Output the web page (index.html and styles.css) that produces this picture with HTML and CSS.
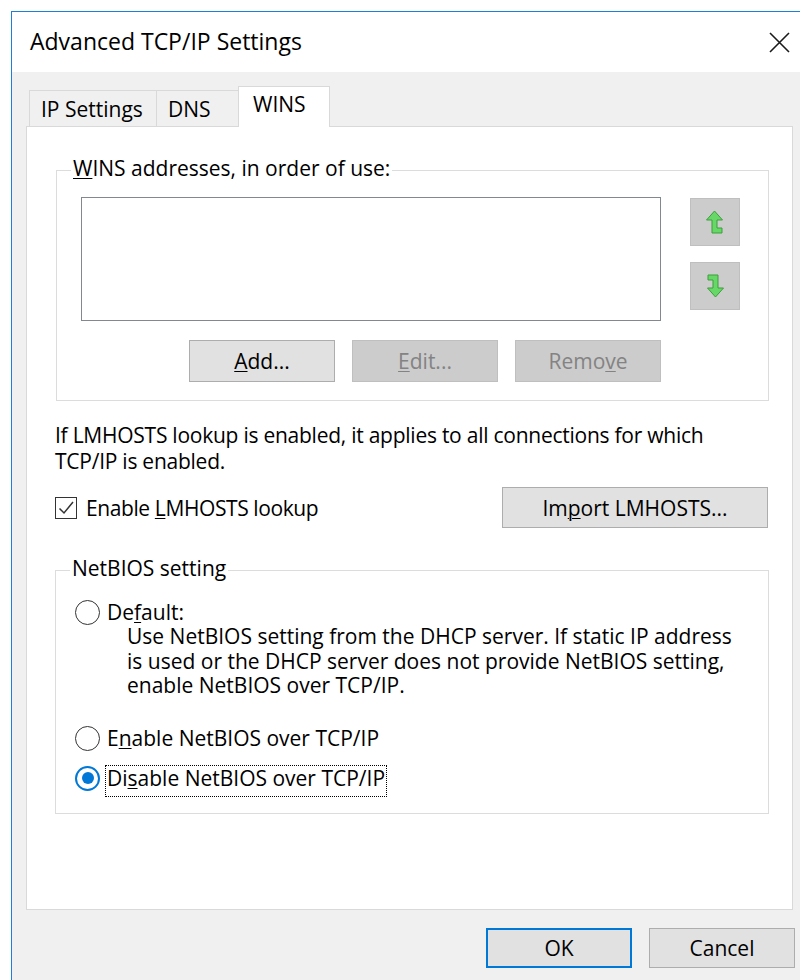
FILE: index.html
```
<!DOCTYPE html>
<html lang="en">
<head>
<meta charset="utf-8">
<title>Advanced TCP/IP Settings</title>
<link rel="stylesheet" href="styles.css">
</head>
<body>
<div class="window">
  <div class="titlebar">
    <span class="title">Advanced TCP/IP Settings</span>
    <svg class="close" width="21" height="21" viewBox="0 0 21 21" aria-label="Close">
      <path d="M1 1 L20 20 M20 1 L1 20" stroke="#1a1a1a" stroke-width="1.6" fill="none"/>
    </svg>
  </div>
  <div class="dialog">
    <div class="tabs">
      <div class="tab tab-ip">IP Settings</div>
      <div class="tab tab-dns">DNS</div>
      <div class="tab tab-wins active">WINS</div>
    </div>
    <div class="panel">
      <div class="group group-wins">
        <div class="group-title"><u>W</u>INS addresses, in order of use:</div>
        <div class="wins-body">
          <div class="listbox"></div>
          <div class="order-buttons">
            <div class="icon-btn" title="Up">
              <svg width="50" height="48" viewBox="0 0 50 48">
                <path d="M32 35 H22 V22 H16.5 L24.5 13 L32.5 22 H27 V30 H32 Z" fill="#67d867" stroke="#3b9f3b" stroke-width="1"/>
              </svg>
            </div>
            <div class="icon-btn" title="Down">
              <svg width="50" height="48" viewBox="0 0 50 48">
                <path d="M18 13 H28 V26 H33.5 L25.5 35 L17.5 26 H23 V18 H18 Z" fill="#67d867" stroke="#3b9f3b" stroke-width="1"/>
              </svg>
            </div>
          </div>
        </div>
        <div class="list-actions">
          <div class="btn"><u>A</u>dd...</div>
          <div class="btn disabled"><u>E</u>dit...</div>
          <div class="btn disabled">Remo<u>v</u>e</div>
        </div>
      </div>

      <p class="note">If LMHOSTS lookup is enabled, it applies to all connections for which<br>TCP/IP is enabled.</p>

      <div class="check-row">
        <label class="check">
          <span class="checkbox">
            <svg width="20" height="20" viewBox="0 0 20 20">
              <path d="M3.5 10.5 L8 15 L17 4" stroke="#333" stroke-width="1.5" fill="none"/>
            </svg>
          </span>
          <span class="check-text">Enable <u>L</u>MHOSTS lookup</span>
        </label>
        <div class="btn btn-import">Im<u>p</u>ort LMHOSTS...</div>
      </div>

      <div class="group group-netbios">
        <div class="group-title">NetBIOS setting</div>
        <div class="radio-row row-default">
          <span class="radio"></span>
          <span>De<u>f</u>ault:</span>
        </div>
        <p class="desc">Use NetBIOS setting from the DHCP server. If static IP address<br>is used or the DHCP server does not provide NetBIOS setting,<br>enable NetBIOS over TCP/IP.</p>
        <div class="radio-row row-enable">
          <span class="radio"></span>
          <span>E<u>n</u>able NetBIOS over TCP/IP</span>
        </div>
        <div class="radio-row row-disable">
          <span class="radio checked"></span>
          <span class="focus">Di<u>s</u>able NetBIOS over TCP/IP</span>
        </div>
      </div>
    </div>

    <div class="dialog-buttons">
      <div class="btn btn-default">OK</div>
      <div class="btn">Cancel</div>
    </div>
  </div>
</div>
</body>
</html>
```
FILE: styles.css
```
html, body {
  margin: 0;
  padding: 0;
  background: #ffffff;
  overflow: hidden;
}

body {
  font-family: "Open Sans", "Noto Sans", sans-serif;
  font-size: 21px;
  color: #000;
}

u {
  text-decoration-thickness: 1px;
  text-underline-offset: 2px;
}

/* window frame */
.window {
  margin: 11px 0 0 11px;
  height: 969px;
  border-top: 1px solid #1c80d8;
  border-left: 1px solid #1c80d8;
  background: #f0f0f0;
  overflow: hidden;
}

.titlebar {
  height: 60px;
  box-sizing: border-box;
  padding: 0 10px 2px 18px;
  background: #ffffff;
  display: flex;
  align-items: center;
  justify-content: space-between;
}

.title {
  font-size: 23px;
  line-height: 30px;
  white-space: nowrap;
}

.close {
  display: block;
  margin-top: 2px;
}

.dialog {
  padding-left: 14px;
}

/* tab strip */
.tabs {
  display: flex;
  align-items: flex-end;
  height: 40px;
  margin-left: 3px;
  padding-top: 14px;
}

.tab {
  box-sizing: border-box;
  height: 36px;
  border: 1px solid #d9d9d9;
  border-bottom: none;
  background: #f0f0f0;
  line-height: 26px;
  padding-top: 5px;
  white-space: nowrap;
}

.tab + .tab {
  margin-left: -1px;
}

.tab-ip {
  width: 128px;
  padding-left: 11px;
}

.tab-dns {
  width: 83px;
  padding-left: 11px;
}

.tab-wins {
  width: 92px;
  padding-left: 14px;
}

.tab.active {
  position: relative;
  z-index: 1;
  height: 41px;
  margin-bottom: -1px;
  padding-top: 4px;
  background: #ffffff;
}

/* tab page */
.panel {
  box-sizing: border-box;
  width: 767px;
  height: 784px;
  border: 1px solid #d9d9d9;
  background: #ffffff;
  padding: 0 23px 0 28px;
}

/* group boxes: caption sits on the top border */
.group {
  border: 1px solid #dcdcdc;
  line-height: 25px;
}

.group-title {
  display: block;
  width: max-content;
  line-height: 26px;
  margin: -16px 0 0 14px;
  padding: 0 2px;
  background: #ffffff;
  white-space: nowrap;
}

.group-wins {
  margin: 43px 0 0 1px;
  padding-bottom: 18px;
}

.wins-body {
  display: flex;
  gap: 29px;
  margin: 16px 0 0 24px;
}

.listbox {
  box-sizing: border-box;
  width: 580px;
  height: 124px;
  border: 1px solid #828790;
  background: #ffffff;
}

.order-buttons {
  display: flex;
  flex-direction: column;
  gap: 16px;
  padding-top: 1px;
}

.icon-btn {
  box-sizing: border-box;
  width: 50px;
  height: 48px;
  background: #cccccc;
  border: 1px solid #bfbfbf;
}

.icon-btn svg {
  display: block;
  margin: -1px;
}

.list-actions {
  display: flex;
  justify-content: flex-end;
  gap: 17px;
  width: 580px;
  margin: 19px 0 0 24px;
}

/* push buttons */
.btn {
  box-sizing: border-box;
  width: 146px;
  height: 42px;
  border: 1px solid #adadad;
  background: #e1e1e1;
  display: flex;
  align-items: center;
  justify-content: center;
  line-height: 26px;
  white-space: nowrap;
}

.btn.disabled {
  background: #cccccc;
  border-color: #bfbfbf;
  color: #838383;
}

.note {
  margin: 21px 0 0;
  line-height: 26px;
  letter-spacing: -0.25px;
  white-space: nowrap;
}

.check-row {
  display: flex;
  align-items: center;
  justify-content: space-between;
  margin: 13px 1px 0 0;
}

.check {
  display: flex;
  align-items: center;
  gap: 9px;
  line-height: 26px;
}

.check-text {
  letter-spacing: -0.4px;
}

.checkbox {
  box-sizing: border-box;
  width: 22px;
  height: 22px;
  border: 1.5px solid #333333;
  background: #ffffff;
  display: flex;
  align-items: center;
  justify-content: center;
}

.checkbox svg {
  display: block;
}

.btn-import {
  width: 266px;
  height: 41px;
}

.group-netbios {
  margin-top: 42px;
  padding-bottom: 22px;
}

.radio-row {
  display: flex;
  align-items: center;
  height: 25px;
  gap: 7px;
  margin-left: 19px;
  white-space: nowrap;
}

.row-default {
  margin-top: 19px;
}

.row-enable {
  margin-top: 28px;
}

.row-disable {
  margin-top: 15px;
}

.radio {
  box-sizing: border-box;
  flex: none;
  width: 25px;
  height: 25px;
  border: 1.5px solid #333333;
  border-radius: 50%;
  background: #ffffff;
  display: flex;
  align-items: center;
  justify-content: center;
}

.radio.checked {
  border: 2px solid #0078d7;
}

.radio.checked::after {
  content: "";
  width: 12px;
  height: 12px;
  border-radius: 50%;
  background: #0078d7;
}

.focus {
  border: 1px dotted #000000;
  padding: 0 1px 5px 1px;
  margin: -1px -2px -6px -2px;
}

.desc {
  margin: -1px 0 0 71px;
  line-height: 24.5px;
  white-space: nowrap;
}

/* OK / Cancel */
.dialog-buttons {
  display: flex;
  justify-content: flex-end;
  gap: 17px;
  margin-top: 18px;
  padding-right: 5px;
}

.dialog-buttons .btn {
  height: 40px;
}

.btn.btn-default {
  border: 2px solid #0078d7;
}
```
